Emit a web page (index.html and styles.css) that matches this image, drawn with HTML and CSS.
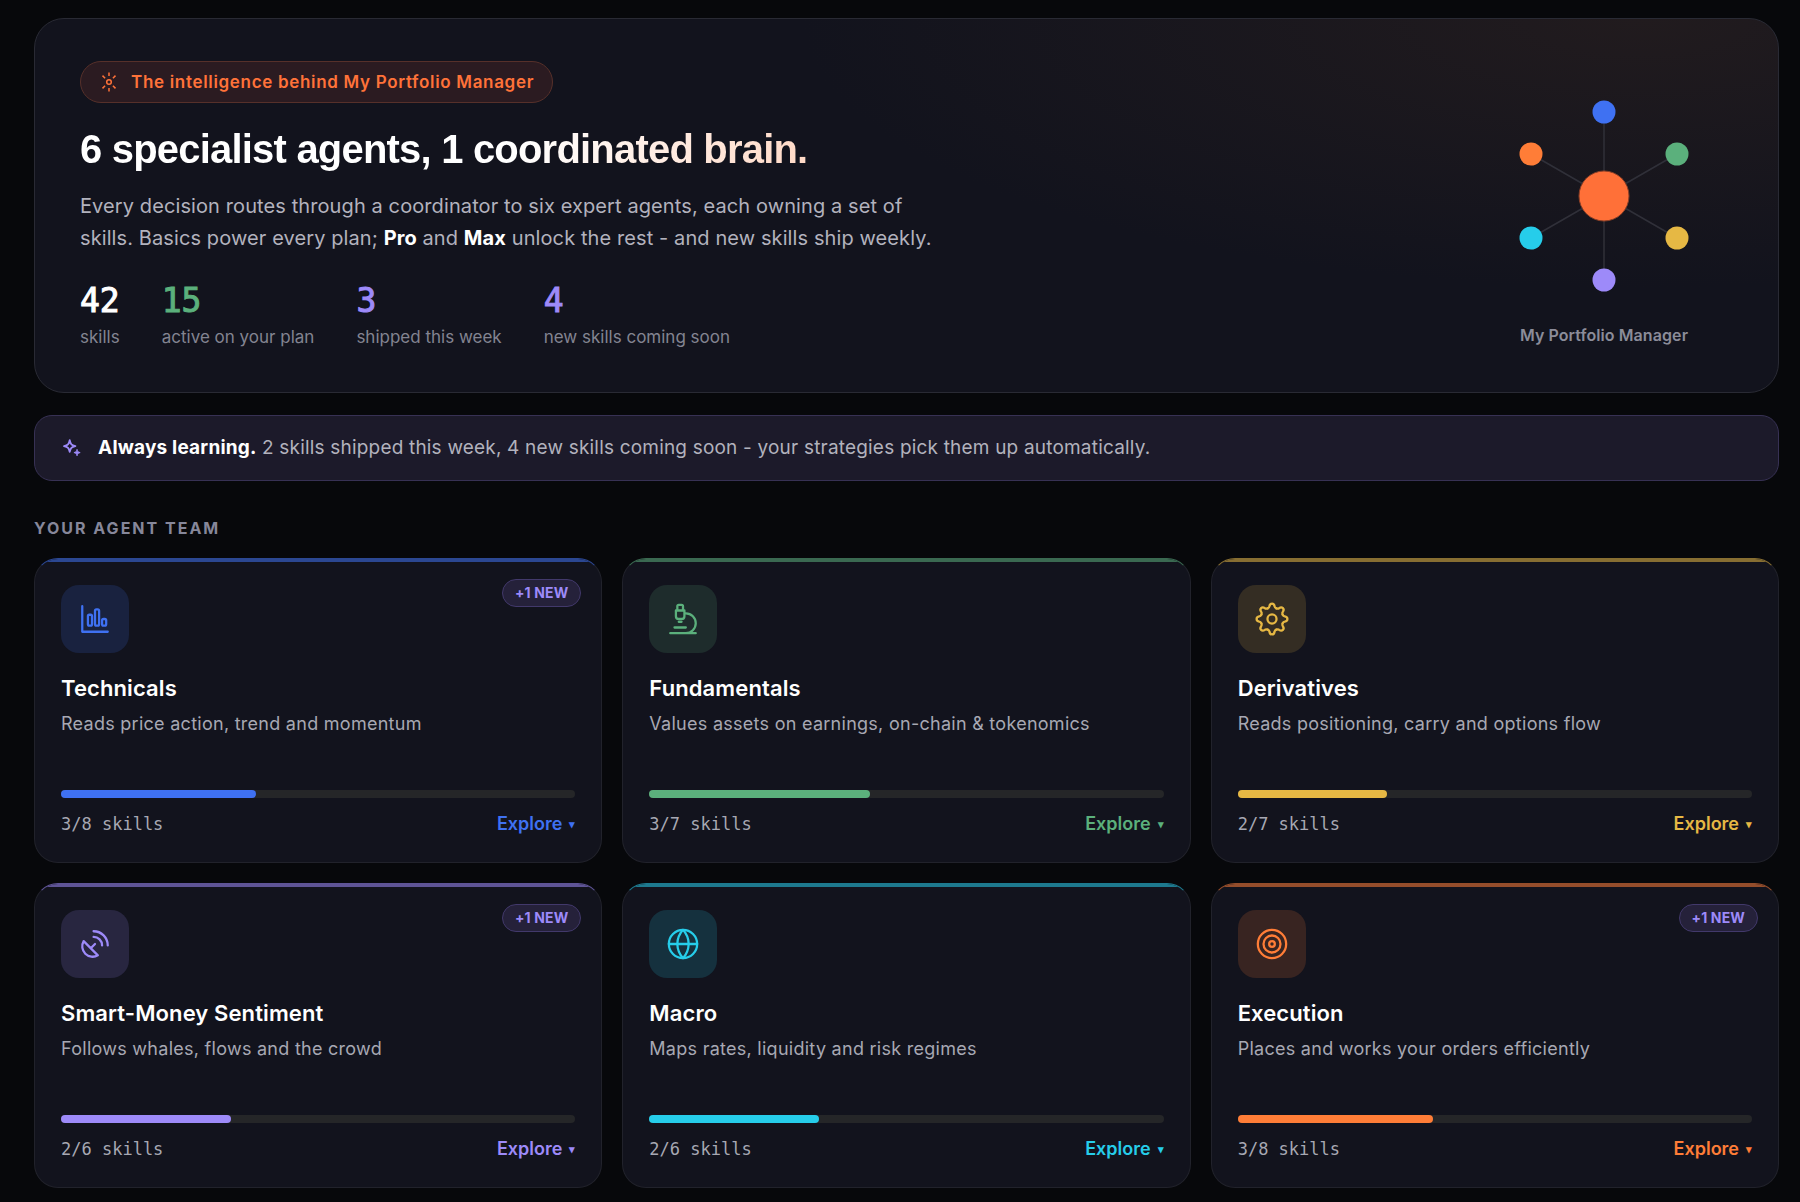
FILE: index.html
```html
<!DOCTYPE html>
<html lang="en">
<head>
<meta charset="utf-8">
<meta name="viewport" content="width=device-width, initial-scale=1">
<title>My Portfolio Manager</title>
<link rel="stylesheet" href="styles.css">
</head>
<body>
<main class="page">
  <section class="hero">
    <div class="hero-copy">
      <p class="pill">
        <svg class="pill-icon" viewBox="0 0 20 20" aria-hidden="true"><circle cx="10" cy="10" r="2.300"/><path d="M10 .5v3.600M10 15.900v3.600M3.500 3.600l2.600 2.600M16.500 3.600l-2.600 2.600M3.500 16.400l2.600-2.600M16.500 16.400l-2.600-2.600"/></svg>
        The intelligence behind My Portfolio Manager
      </p>
      <h1 class="headline">6 specialist agents, 1 coordinated brain.</h1>
      <p class="lead">Every decision routes through a coordinator to six expert agents, each owning a set of skills. Basics power every plan; <strong>Pro</strong> and <strong>Max</strong> unlock the rest - and new skills ship weekly.</p>
      <dl class="stats">
        <div class="stat"><dt>skills</dt><dd>42</dd></div>
        <div class="stat green"><dt>active on your plan</dt><dd>15</dd></div>
        <div class="stat violet"><dt>shipped this week</dt><dd>3</dd></div>
        <div class="stat violet"><dt>new skills coming soon</dt><dd>4</dd></div>
      </dl>
    </div>
    <figure class="hub">
      <svg class="hub-graph" viewBox="0 0 250 250" aria-hidden="true">
        <g class="spokes"><path d="M125 125V41M125 125l73-42M125 125l73 42M125 125v84M125 125l-73 42M125 125l-73-42"/></g>
        <circle cx="125" cy="41" r="11.500" fill="#3f71f2"/>
        <circle cx="198" cy="83" r="11.500" fill="#5bb07c"/>
        <circle cx="198" cy="167" r="11.500" fill="#e6b844"/>
        <circle cx="125" cy="209" r="11.500" fill="#9d8af9"/>
        <circle cx="52" cy="167" r="11.500" fill="#26cdea"/>
        <circle cx="52" cy="83" r="11.500" fill="#ff7d37"/>
        <circle class="core" cx="125" cy="125" r="25"/>
      </svg>
      <figcaption>My Portfolio Manager</figcaption>
    </figure>
  </section>

  <section class="notice">
    <svg class="notice-icon" viewBox="0 0 24 24" aria-hidden="true"><path d="M9.500 3.500c.8 4.200 2 5.500 6.200 6.400-4.200.9-5.400 2.200-6.200 6.400-.8-4.200-2-5.500-6.200-6.400 4.200-.9 5.400-2.200 6.200-6.400z"/><path class="solid" d="M17.500 13.500c.4 2.200 1.200 3 3.400 3.500-2.200.5-3 1.300-3.400 3.500-.4-2.200-1.200-3-3.400-3.500 2.200-.5 3-1.300 3.400-3.500z"/></svg>
    <p><strong>Always learning.</strong> 2 skills shipped this week, 4 new skills coming soon - your strategies pick them up automatically.</p>
  </section>

  <h2 class="section-title">Your agent team</h2>
  <section class="team">
    <article class="card blue">
      <span class="new">+1 NEW</span>
      <div class="tile"><svg viewBox="0 0 24 24" aria-hidden="true"><path d="M3 3v18h18"/><rect x="7" y="9" width="2.900" height="7.700" rx="1"/><rect x="12" y="5.200" width="2.900" height="11.500" rx="1"/><rect x="17" y="12" width="2.900" height="4.700" rx="1"/></svg></div>
      <h3>Technicals</h3>
      <p class="desc">Reads price action, trend and momentum</p>
      <div class="track"><div class="fill" style="width:38%"></div></div>
      <div class="foot"><span class="count">3/8 skills</span><button type="button" class="explore">Explore <span class="caret">▾</span></button></div>
    </article>
    <article class="card green">
      <div class="tile"><svg viewBox="0 0 24 24" aria-hidden="true"><path d="M6 18h8M3 22h18M14 22a7 7 0 1 0 0-14h-1M9 14h2M9 12a2 2 0 0 1-2-2V6h6v4a2 2 0 0 1-2 2ZM12 6V3a1 1 0 0 0-1-1H9a1 1 0 0 0-1 1v3"/></svg></div>
      <h3>Fundamentals</h3>
      <p class="desc">Values assets on earnings, on-chain &amp; tokenomics</p>
      <div class="track"><div class="fill" style="width:43%"></div></div>
      <div class="foot"><span class="count">3/7 skills</span><button type="button" class="explore">Explore <span class="caret">▾</span></button></div>
    </article>
    <article class="card gold">
      <div class="tile"><svg viewBox="-12 -12 24 24" aria-hidden="true">
        <defs><path id="tooth" d="M-3.100-7.480C-2.200-7.850-1.850-8.100-1.800-9C-1.500-11.500 1.500-11.500 1.800-9C1.850-8.100 2.200-7.850 3.100-7.480"/></defs>
        <use href="#tooth"/><use href="#tooth" transform="rotate(45)"/><use href="#tooth" transform="rotate(90)"/><use href="#tooth" transform="rotate(135)"/><use href="#tooth" transform="rotate(180)"/><use href="#tooth" transform="rotate(225)"/><use href="#tooth" transform="rotate(270)"/><use href="#tooth" transform="rotate(315)"/>
        <circle r="3.200"/></svg></div>
      <h3>Derivatives</h3>
      <p class="desc">Reads positioning, carry and options flow</p>
      <div class="track"><div class="fill" style="width:29%"></div></div>
      <div class="foot"><span class="count">2/7 skills</span><button type="button" class="explore">Explore <span class="caret">▾</span></button></div>
    </article>
    <article class="card violet">
      <span class="new">+1 NEW</span>
      <div class="tile"><svg viewBox="0 0 24 24" aria-hidden="true"><path d="M4 10a7.310 7.310 0 0 0 10 10ZM9 15l3-3M17 13a6 6 0 0 0-6-6M21 13A10 10 0 0 0 11 3"/></svg></div>
      <h3>Smart-Money Sentiment</h3>
      <p class="desc">Follows whales, flows and the crowd</p>
      <div class="track"><div class="fill" style="width:33%"></div></div>
      <div class="foot"><span class="count">2/6 skills</span><button type="button" class="explore">Explore <span class="caret">▾</span></button></div>
    </article>
    <article class="card cyan">
      <div class="tile"><svg viewBox="0 0 24 24" aria-hidden="true"><circle cx="12" cy="12" r="10"/><path d="M12 2a15.300 15.300 0 0 1 4 10 15.300 15.300 0 0 1-4 10 15.300 15.300 0 0 1-4-10 15.300 15.300 0 0 1 4-10zM2 12h20"/></svg></div>
      <h3>Macro</h3>
      <p class="desc">Maps rates, liquidity and risk regimes</p>
      <div class="track"><div class="fill" style="width:33%"></div></div>
      <div class="foot"><span class="count">2/6 skills</span><button type="button" class="explore">Explore <span class="caret">▾</span></button></div>
    </article>
    <article class="card orange">
      <span class="new">+1 NEW</span>
      <div class="tile"><svg viewBox="0 0 24 24" aria-hidden="true"><circle cx="12" cy="12" r="10"/><circle cx="12" cy="12" r="6"/><circle cx="12" cy="12" r="2"/></svg></div>
      <h3>Execution</h3>
      <p class="desc">Places and works your orders efficiently</p>
      <div class="track"><div class="fill" style="width:38%"></div></div>
      <div class="foot"><span class="count">3/8 skills</span><button type="button" class="explore">Explore <span class="caret">▾</span></button></div>
    </article>
  </section>
</main>
</body>
</html>
```
FILE: styles.css
```css
* { box-sizing: border-box; margin: 0; padding: 0; }

body {
  background: #07080b;
  color: #fff;
  font-family: Inter, "Liberation Sans", sans-serif;
}

.blue { --accent: #3f71f2; }
.green { --accent: #5bb07c; }
.gold { --accent: #e6b844; }
.violet { --accent: #9d8af9; }
.cyan { --accent: #26cdea; }
.orange { --accent: #ff7d37; }

.page { padding: 18px 21px 13px 34px; }

.hero {
  display: flex;
  justify-content: space-between;
  align-items: center;
  padding: 42px 49px 40px 45px;
  border: 1px solid #292a34;
  border-radius: 30px;
  background: radial-gradient(ellipse 48% 72% at 92% 0%, #211b1e 0%, #12131d 100%);
}

.pill {
  display: flex;
  align-items: center;
  gap: 12px;
  width: fit-content;
  height: 42px;
  padding: 0 18px;
  border: 1px solid #56302a;
  border-radius: 21px;
  background: #2b1b21;
  color: #ff7239;
  font-size: 17px;
  font-weight: 600;
  letter-spacing: 0.04em;
}
.pill-icon { width: 20px; height: 20px; fill: none; stroke: currentColor; stroke-width: 1.5; }

.headline {
  width: fit-content;
  margin-top: 19px;
  font-family: "Liberation Sans", Arial, sans-serif;
  font-size: 40px;
  font-weight: 700;
  line-height: 54px;
  letter-spacing: -0.02em;
  background: linear-gradient(100deg, #fff 60%, #ffd9c6 100%);
  background-clip: text;
  color: transparent;
}

.lead {
  max-width: 860px;
  margin-top: 14px;
  color: #b2b2bd;
  font-size: 20px;
  line-height: 32px;
  letter-spacing: 0.005em;
}
.lead strong { color: #fff; font-weight: 700; }

.stats { display: flex; gap: 42px; margin-top: 26px; }
.stat { display: flex; flex-direction: column-reverse; }
.stat dd {
  color: var(--accent, #fff);
  font-family: "DejaVu Sans Mono", "Liberation Mono", monospace;
  font-size: 33px;
  font-weight: 400;
  line-height: 42px;
  -webkit-text-stroke: 1px currentColor;
}
.stat dt { color: #838491; font-size: 17px; line-height: 30px; }

.hub { display: flex; flex-direction: column; align-items: center; padding-top: 4px; }
.hub-graph { width: 250px; height: 250px; }
.spokes { fill: none; stroke: #303039; stroke-width: 1.5; }
.core { fill: #ff7038; stroke: #8c4027; stroke-width: 1; }
.hub figcaption {
  margin-top: 2px;
  color: #8b8c99;
  font-size: 16px;
  font-weight: 600;
  line-height: 24px;
  letter-spacing: 0.005em;
}

.notice {
  display: flex;
  align-items: center;
  gap: 15px;
  margin-top: 22px;
  padding: 16px 26px;
  border: 1px solid #373154;
  border-radius: 18px;
  background: #1c1a2a;
  color: #b2b2bd;
  font-size: 19px;
  line-height: 32px;
  letter-spacing: 0.01em;
}
.notice strong { color: #fff; font-weight: 700; }
.notice-icon { width: 22px; height: 22px; fill: none; stroke: #9d8af9; stroke-width: 2; stroke-linejoin: round; }
.notice-icon .solid { fill: #9d8af9; stroke-width: 1; }

.section-title {
  margin: 36px 0 19px;
  color: #86879a;
  font-size: 16px;
  font-weight: 700;
  line-height: 22px;
  letter-spacing: 2px;
  text-transform: uppercase;
}

.team { display: grid; grid-template-columns: repeat(3, 1fr); gap: 20px; }

.card {
  --bar: color-mix(in srgb, var(--accent) 55%, #12131d);
  position: relative;
  padding: 26px 26px 24px;
  border: 1px solid #21222b;
  border-top-color: var(--bar);
  border-radius: 24px;
  background: #12131d;
  overflow: hidden;
}
.card::before {
  content: "";
  position: absolute;
  inset: 0 0 auto;
  height: 3px;
  background: var(--bar);
}

.new {
  position: absolute;
  top: 20px;
  right: 20px;
  padding: 0 12px;
  border: 1px solid #42396b;
  border-radius: 14px;
  background: #25213a;
  color: #9d8af9;
  font-size: 14px;
  font-weight: 700;
  line-height: 26px;
  letter-spacing: 0.01em;
}

.tile {
  display: grid;
  place-items: center;
  width: 68px;
  height: 68px;
  border-radius: 18px;
  background: color-mix(in srgb, var(--accent) 16%, #12131d);
}
.tile svg {
  width: 34px;
  height: 34px;
  fill: none;
  stroke: var(--accent);
  stroke-width: 1.6;
  stroke-linecap: round;
  stroke-linejoin: round;
}

.card h3 { margin-top: 19px; font-size: 22px; font-weight: 600; line-height: 32px; letter-spacing: 0.005em; }
.desc { margin-top: 4px; color: #a7a8b3; font-size: 18px; line-height: 32px; letter-spacing: 0.015em; }

.track { height: 8px; margin-top: 50px; border-radius: 4px; background: #252628; }
.fill { height: 100%; border-radius: 4px; background: var(--accent); }

.foot { display: flex; justify-content: space-between; align-items: center; margin-top: 12px; }
.count { color: #a7a8b3; font-family: "DejaVu Sans Mono", "Liberation Mono", monospace; font-size: 17px; line-height: 28px; }
.explore {
  display: flex;
  align-items: center;
  gap: 7px;
  border: 0;
  background: none;
  color: var(--accent);
  font: 600 18px/28px Inter, "Liberation Sans", sans-serif;
  cursor: pointer;
}
.caret { font-size: 11px; }
```
